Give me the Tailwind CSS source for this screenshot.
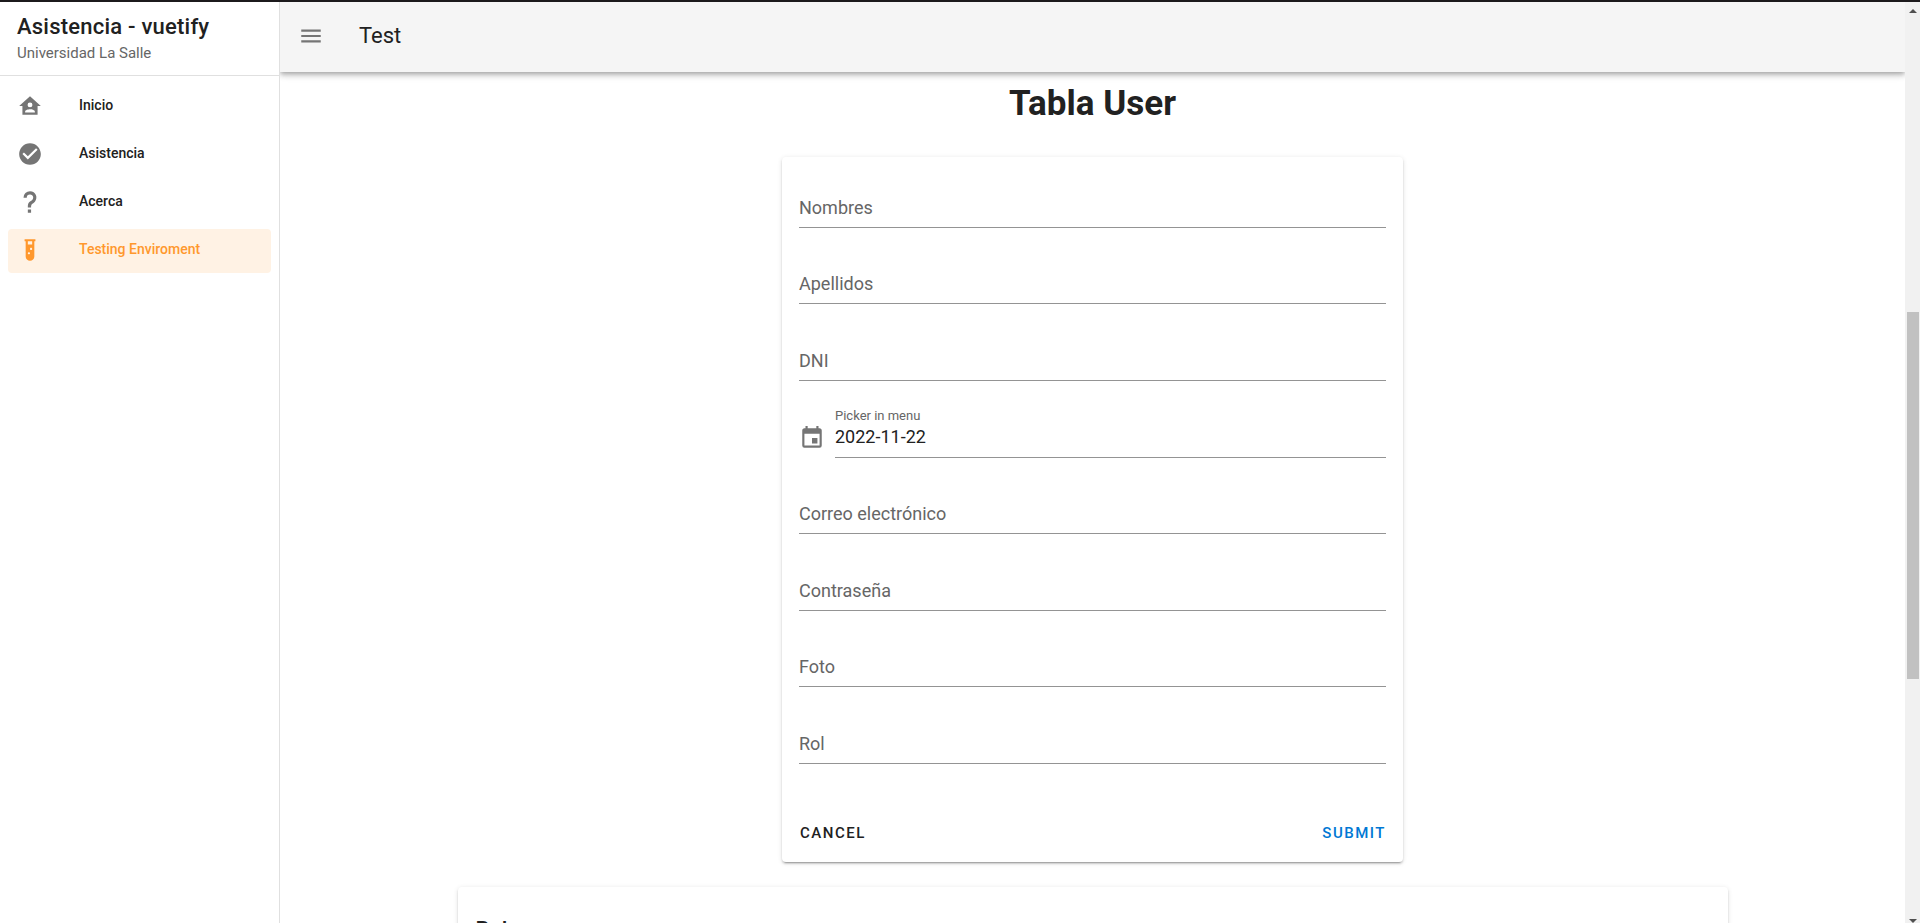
<!DOCTYPE html>
<html lang="es">
<head>
<meta charset="utf-8">
<title>Asistencia - vuetify</title>
<script src="https://cdn.jsdelivr.net/npm/@tailwindcss/browser@4"></script>
</head>
<body class="flex h-screen flex-col overflow-hidden border-t-2 border-[#1c1a1c] bg-white font-[Roboto,sans-serif] text-[#212121]">
<div class="flex min-h-0 flex-1">
  <aside class="flex w-[280px] shrink-0 flex-col border-r border-[#e0e0e0]">
    <div class="border-b border-[#e0e0e0] px-[17px] pt-[11px] pb-[10px]">
      <h2 class="text-[22px] leading-[28px] font-medium tracking-[0.01em]">Asistencia - vuetify</h2>
      <p class="text-[15px] leading-[24px] text-[#666666]">Universidad La Salle</p>
    </div>
    <nav class="flex flex-col gap-1 px-2 py-[9px] text-[14px] font-medium">
      <a href="#" class="flex h-11 items-center gap-9 rounded px-[9px] pb-0.5">
        <svg class="size-[26px] fill-[#757575]" viewBox="0 0 24 24"><path d="M12,3L2,12H5V20H19V12H22L12,3M12,8.75A2.25,2.25 0 0,1 14.25,11A2.25,2.25 0 0,1 12,13.25A2.25,2.25 0 0,1 9.75,11A2.25,2.25 0 0,1 12,8.75M12,15C13.5,15 16.5,15.75 16.5,17.25V18H7.5V17.25C7.5,15.75 10.5,15 12,15Z"/></svg>
        <span class="pb-0.5">Inicio</span></a>
      <a href="#" class="flex h-11 items-center gap-9 rounded px-[9px] pb-0.5">
        <svg class="size-[26px] fill-[#757575]" viewBox="0 0 24 24"><path d="M12 2C6.5 2 2 6.5 2 12S6.5 22 12 22 22 17.5 22 12 17.5 2 12 2M10 17L5 12L6.41 10.59L10 14.17L17.59 6.58L19 8L10 17Z"/></svg>
        <span class="pb-0.5">Asistencia</span></a>
      <a href="#" class="flex h-11 items-center gap-9 rounded px-[9px] pb-0.5">
        <svg class="size-[26px] fill-[#757575]" viewBox="0 0 24 24"><path d="M10,19H13V22H10V19M12,2C17.35,2.22 19.68,7.62 16.5,11.67C15.67,12.67 14.33,13.33 13.67,14.17C13,15 13,16 13,17H10C10,15.33 10,13.92 10.67,12.92C11.33,11.92 12.67,11.33 13.5,10.67C15.92,8.43 15.32,5.26 12,5A3,3 0 0,0 9,8H6A6,6 0 0,1 12,2Z"/></svg>
        <span class="pb-0.5">Acerca</span></a>
      <a href="#" aria-current="page" class="flex h-11 items-center gap-9 rounded bg-[#fff2e4] px-[9px] pb-0.5 text-[#ff982d]">
        <svg class="size-[26px] fill-current" viewBox="0 0 24 24"><path d="M7,2V4H8V18A4,4 0 0,0 12,22A4,4 0 0,0 16,18V4H17V2H7M11,16C10.4,16 10,15.6 10,15C10,14.4 10.4,14 11,14C11.6,14 12,14.4 12,15C12,15.6 11.6,16 11,16M13,12C12.4,12 12,11.6 12,11C12,10.4 12.4,10 13,10C13.6,10 14,10.4 14,11C14,11.6 13.6,12 13,12M14,7H10V4H14V7Z"/></svg>
        <span class="pb-0.5">Testing Enviroment</span></a>
    </nav>
  </aside>

  <div class="flex min-w-0 flex-1 flex-col overflow-hidden">
    <header class="z-10 flex h-[70px] shrink-0 items-center gap-[35px] bg-[#f5f5f5] px-[18px] pb-0.5 shadow-[0_2px_4px_-1px_rgba(0,0,0,0.2),0_4px_5px_0_rgba(0,0,0,0.14),0_1px_10px_0_rgba(0,0,0,0.12)]">
      <button type="button" aria-label="Menú" class="flex w-[26px] justify-center"><svg class="size-[26px] fill-[#757575]" viewBox="0 0 24 24"><path d="M3,6H21V8H3V6M3,11H21V13H3V11M3,16H21V18H3V16Z"/></svg></button>
      <h1 class="pb-0.5 text-[22px] leading-[33px]">Test</h1>
    </header>

    <main class="flex min-h-0 flex-1 flex-col items-center overflow-hidden">
      <h2 class="mt-[5px] shrink-0 text-[35px] leading-[53px] font-bold">Tabla User</h2>
      <form class="mt-[27px] flex w-full max-w-[621px] shrink-0 flex-col rounded bg-white px-[17px] shadow-[0_3px_1px_-2px_rgba(0,0,0,0.2),0_2px_2px_0_rgba(0,0,0,0.14),0_1px_5px_0_rgba(0,0,0,0.12)]">
        <div class="-mt-1.5 grid min-h-[613px] auto-rows-fr text-[18px] leading-[26px] text-[#666666]">
          <div class="flex items-end"><div class="flex flex-1 border-b border-[#949494] pb-[6px]"><label for="nombres">Nombres</label><input id="nombres" class="min-w-0 flex-1 outline-none"></div></div>
          <div class="flex items-end"><div class="flex flex-1 border-b border-[#949494] pb-[6px]"><label for="apellidos">Apellidos</label><input id="apellidos" class="min-w-0 flex-1 outline-none"></div></div>
          <div class="flex items-end"><div class="flex flex-1 border-b border-[#949494] pb-[6px]"><label for="dni">DNI</label><input id="dni" class="min-w-0 flex-1 outline-none"></div></div>
          <div class="flex items-end gap-[10px]">
            <svg class="mb-[7px] size-[26px] fill-[#757575]" viewBox="0 0 24 24"><path d="M19,19H5V8H19M16,1V3H8V1H6V3H5C3.89,3 3,3.89 3,5V19A2,2 0 0,0 5,21H19A2,2 0 0,0 21,19V5C21,3.89 20.1,3 19,3H18V1M17,12H12V17H17V12Z"/></svg>
            <div class="flex flex-1 flex-col border-b border-[#949494] pb-[7px]"><label for="fecha" class="text-[13px] leading-[17px]">Picker in menu</label><input id="fecha" value="2022-11-22" readonly class="h-[26px] text-[#212121] outline-none"></div>
          </div>
          <div class="flex items-end"><div class="flex flex-1 border-b border-[#949494] pb-[6px]"><label for="correo">Correo electrónico</label><input id="correo" type="email" class="min-w-0 flex-1 outline-none"></div></div>
          <div class="flex items-end"><div class="flex flex-1 border-b border-[#949494] pb-[6px]"><label for="clave">Contraseña</label><input id="clave" type="password" class="min-w-0 flex-1 outline-none"></div></div>
          <div class="flex items-end"><div class="flex flex-1 border-b border-[#949494] pb-[6px]"><label for="foto">Foto</label><input id="foto" class="min-w-0 flex-1 outline-none"></div></div>
          <div class="flex items-end"><div class="flex flex-1 border-b border-[#949494] pb-[6px]"><label for="rol">Rol</label><input id="rol" class="min-w-0 flex-1 outline-none"></div></div>
        </div>
        <div class="flex justify-between pt-[49px] pb-[9px] text-[15px] font-medium">
          <button type="button" class="h-10 px-px tracking-widest">CANCEL</button>
          <button type="submit" class="h-10 tracking-widest text-[#0078d4]">SUBMIT</button>
        </div>
      </form>
      <section class="mt-[25px] w-full max-w-[1270px] shrink-0 rounded bg-white px-[18px] pt-[25px] shadow-[0_3px_1px_-2px_rgba(0,0,0,0.2),0_2px_2px_0_rgba(0,0,0,0.14),0_1px_5px_0_rgba(0,0,0,0.12)]">
        <h2 class="pb-10 text-[22px] leading-[35px] font-medium">Roles</h2>
      </section>
    </main>
  </div>

  <div aria-hidden="true" class="flex w-[15px] shrink-0 flex-col items-center bg-[#f1f1f1]">
    <svg class="mt-[7px] h-1 w-2 fill-[#505050]" viewBox="0 0 8 4"><path d="M0 4L4 0L8 4Z"/></svg>
    <div class="flex w-full flex-1 flex-col px-px pl-0.5">
      <div class="grow-[299]"></div><div class="grow-[367] bg-[#c1c1c1]"></div><div class="grow-[240]"></div>
    </div>
    <svg class="h-1 w-2 fill-[#505050]" viewBox="0 0 8 4"><path d="M0 0L4 4L8 0Z"/></svg>
  </div>
</div>
</body>
</html>
